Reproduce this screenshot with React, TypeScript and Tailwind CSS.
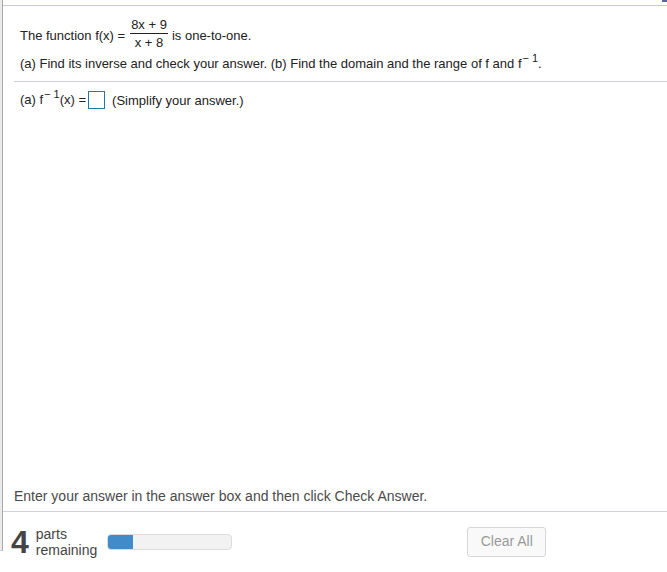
import React from "react";

export default function App() {
  return (
    <div className="w-[667px] h-[572px] bg-white flex relative overflow-hidden font-['Liberation_Sans',Arial,sans-serif] text-[#222]">
      <div className="w-[3px] h-[551px] bg-[#ebebeb] border-r border-[#a9a9a9] border-b border-b-[#cfcfcf] shrink-0" />
      <div className="absolute top-0 right-0 w-[5px] h-[2px] bg-[#5b63a6]" />
      <div className="flex-1 flex flex-col">
        <div className="h-[6px] border-b border-[#c7c9d6] shrink-0" />
        <div className="pl-[17px] text-[13px] leading-[15px]">
          <div className="flex items-start mt-[11px]">
            <span className="mt-[11px]">The function f(x) =</span>
            <div className="flex flex-col items-center ml-[5px]">
              <div className="px-[1px] pb-[1px] border-b border-[#222] leading-[15px]">8x + 9</div>
              <div className="pt-[1px] leading-[15px] px-[3px]">x + 8</div>
            </div>
            <span className="mt-[11px] ml-[4px]">is one-to-one.</span>
          </div>
          <div className="mt-[6px]">
            (a) Find its inverse and check your answer. (b) Find the domain and the range of f and f
            <span className="relative -top-[6px] ml-[1px] text-[11px]">&minus;&nbsp;1</span>.
          </div>
        </div>
        <div className="ml-[11px] mt-[9px] border-t border-[#cdd0d8]" />
        <div className="pl-[17px] mt-[9px] flex items-center text-[13px] leading-[15px]">
          <span>
            (a) f<span className="relative -top-[6px] ml-[1px] text-[11px]">&minus;&nbsp;1</span>(x) =
          </span>
          <div className="ml-[2px] w-[17px] h-[18px] border border-[#1f7aa3]" />
          <span className="ml-[7px]">(Simplify your answer.)</span>
        </div>
        <div className="flex-1" />
        <div className="pl-[11px] text-[14px] leading-[16px] text-[#4a4a4a]">
          Enter your answer in the answer box and then click Check Answer.
        </div>
        <div className="mt-[7px] border-t border-[#cdd0d8]" />
        <div className="h-[60px] flex items-center pl-[8px] pb-[1px]">
          <span className="text-[32px] font-bold leading-none text-[#444]">4</span>
          <div className="ml-[7px] flex flex-col text-[14px] leading-[16px] text-[#444]">
            <span>parts</span>
            <span>remaining</span>
          </div>
          <div className="ml-[10px] w-[125px] h-[16px] rounded-[4px] bg-[#f2f2f2] border border-[#dcdcdc] overflow-hidden flex">
            <div className="w-[25px] h-full bg-[#428bca]" />
          </div>
          <button className="ml-[235px] w-[79px] h-[30px] rounded-[3px] border border-[#d6d6d6] bg-[#f9f9f9] text-[14px] text-[#999]">
            Clear All
          </button>
        </div>
      </div>
    </div>
  );
}
